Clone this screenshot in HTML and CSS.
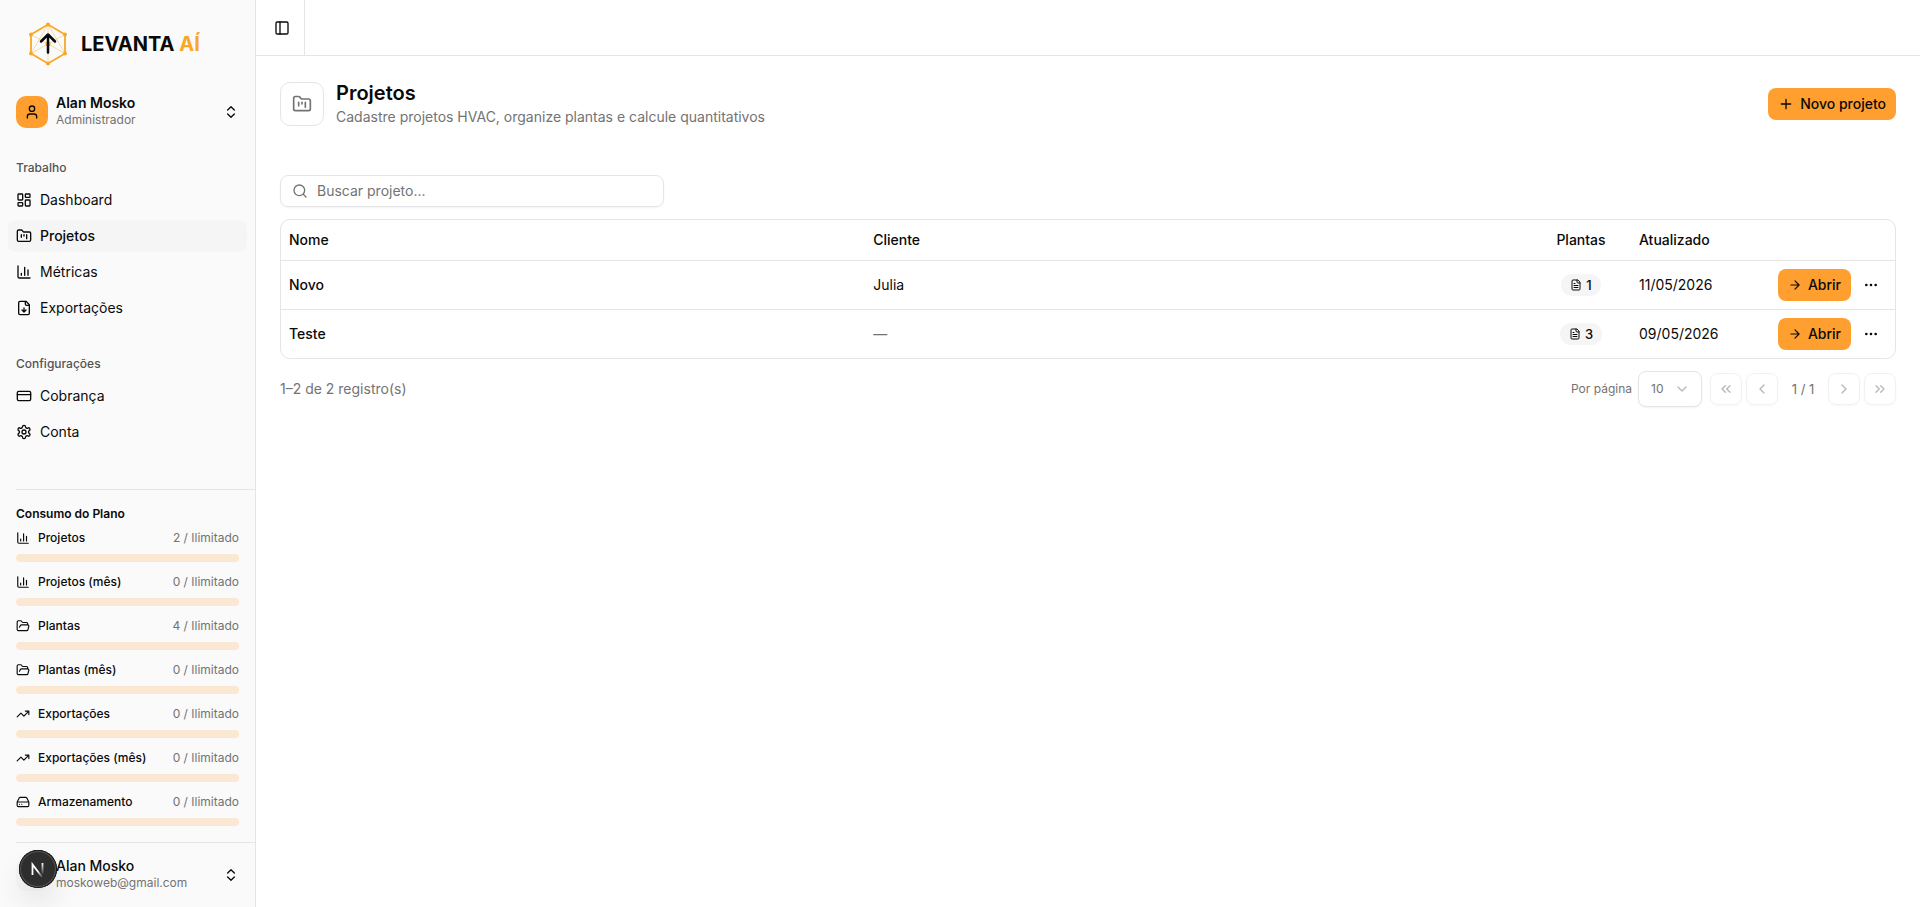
FILE: index.html
```html
<!DOCTYPE html>
<html lang="pt-BR">
<head>
<meta charset="utf-8">
<title>Projetos</title>
<link rel="stylesheet" href="styles.css">
</head>
<body>
<svg class="sprite" aria-hidden="true">
  <symbol id="i-updown" viewBox="0 0 24 24"><path d="m7 15 5 5 5-5M7 9l5-5 5 5"/></symbol>
  <symbol id="i-user" viewBox="0 0 24 24"><circle cx="12" cy="7" r="4"/><path d="M19 21v-2a4 4 0 0 0-4-4H9a4 4 0 0 0-4 4v2"/></symbol>
  <symbol id="i-dash" viewBox="0 0 24 24"><rect x="3" y="3" width="7" height="9" rx="1"/><rect x="14" y="3" width="7" height="5" rx="1"/><rect x="14" y="12" width="7" height="9" rx="1"/><rect x="3" y="16" width="7" height="5" rx="1"/></symbol>
  <symbol id="i-kanban" viewBox="0 0 24 24"><path d="M4 20h16a2 2 0 0 0 2-2V8a2 2 0 0 0-2-2h-7.930a2 2 0 0 1-1.660-.9l-.82-1.200A2 2 0 0 0 7.930 3H4a2 2 0 0 0-2 2v13c0 1.100.9 2 2 2ZM8 10v4M12 10v2M16 10v6"/></symbol>
  <symbol id="i-chart" viewBox="0 0 24 24"><path d="M3 3v16a2 2 0 0 0 2 2h16M18 17V9M13 17V5M8 17v-3"/></symbol>
  <symbol id="i-filedown" viewBox="0 0 24 24"><path d="M15 2H6a2 2 0 0 0-2 2v16a2 2 0 0 0 2 2h12a2 2 0 0 0 2-2V7Z"/><path d="M14 2v4a2 2 0 0 0 2 2h4M12 18v-6M9 15l3 3 3-3"/></symbol>
  <symbol id="i-card" viewBox="0 0 24 24"><rect x="2" y="5" width="20" height="14" rx="2"/><path d="M2 10h20"/></symbol>
  <symbol id="i-gear" viewBox="0 0 24 24"><path d="M12.220 2h-.44a2 2 0 0 0-2 2v.18a2 2 0 0 1-1 1.730l-.43.25a2 2 0 0 1-2 0l-.15-.08a2 2 0 0 0-2.730.73l-.22.38a2 2 0 0 0 .73 2.730l.15.1a2 2 0 0 1 1 1.720v.51a2 2 0 0 1-1 1.740l-.15.09a2 2 0 0 0-.73 2.730l.22.38a2 2 0 0 0 2.730.73l.15-.08a2 2 0 0 1 2 0l.43.25a2 2 0 0 1 1 1.730V20a2 2 0 0 0 2 2h.44a2 2 0 0 0 2-2v-.18a2 2 0 0 1 1-1.730l.43-.25a2 2 0 0 1 2 0l.15.08a2 2 0 0 0 2.730-.73l.22-.39a2 2 0 0 0-.73-2.730l-.15-.08a2 2 0 0 1-1-1.740v-.5a2 2 0 0 1 1-1.740l.15-.09a2 2 0 0 0 .73-2.730l-.22-.38a2 2 0 0 0-2.730-.73l-.15.08a2 2 0 0 1-2 0l-.43-.25a2 2 0 0 1-1-1.730V4a2 2 0 0 0-2-2z"/><circle cx="12" cy="12" r="3"/></symbol>
  <symbol id="i-folder" viewBox="0 0 24 24"><path d="m6 14 1.500-2.900A2 2 0 0 1 9.240 10H20a2 2 0 0 1 1.940 2.500l-1.540 6a2 2 0 0 1-1.950 1.500H4a2 2 0 0 1-2-2V5a2 2 0 0 1 2-2h3.900a2 2 0 0 1 1.690.9l.81 1.200a2 2 0 0 0 1.670.9H18a2 2 0 0 1 2 2v2"/></symbol>
  <symbol id="i-trend" viewBox="0 0 24 24"><path d="M22 7l-8.500 8.500-5-5L2 17M16 7h6v6"/></symbol>
  <symbol id="i-drive" viewBox="0 0 24 24"><path d="M22 12H2M5.450 5.110 2 12v6a2 2 0 0 0 2 2h16a2 2 0 0 0 2-2v-6l-3.450-6.890A2 2 0 0 0 16.760 4H7.240a2 2 0 0 0-1.790 1.110zM6 16h.01M10 16h.01"/></symbol>
  <symbol id="i-panel" viewBox="0 0 24 24"><rect x="3" y="3" width="18" height="18" rx="2"/><path d="M9 3v18"/></symbol>
  <symbol id="i-search" viewBox="0 0 24 24"><circle cx="11" cy="11" r="8"/><path d="m21 21-4.300-4.300"/></symbol>
  <symbol id="i-plus" viewBox="0 0 24 24"><path d="M5 12h14M12 5v14"/></symbol>
  <symbol id="i-filetext" viewBox="0 0 24 24"><path d="M15 2H6a2 2 0 0 0-2 2v16a2 2 0 0 0 2 2h12a2 2 0 0 0 2-2V7Z"/><path d="M14 2v4a2 2 0 0 0 2 2h4M10 9H8M16 13H8M16 17H8"/></symbol>
  <symbol id="i-arrow" viewBox="0 0 24 24"><path d="M5 12h14M12 5l7 7-7 7"/></symbol>
  <symbol id="i-dots" viewBox="0 0 24 24"><circle cx="12" cy="12" r="1"/><circle cx="19" cy="12" r="1"/><circle cx="5" cy="12" r="1"/></symbol>
  <symbol id="i-down" viewBox="0 0 24 24"><path d="m6 9 6 6 6-6"/></symbol>
  <symbol id="i-first" viewBox="0 0 24 24"><path d="m11 17-5-5 5-5M18 17l-5-5 5-5"/></symbol>
  <symbol id="i-prev" viewBox="0 0 24 24"><path d="m15 18-6-6 6-6"/></symbol>
  <symbol id="i-next" viewBox="0 0 24 24"><path d="m9 18 6-6-6-6"/></symbol>
  <symbol id="i-last" viewBox="0 0 24 24"><path d="m6 17 5-5-5-5M13 17l5-5-5-5"/></symbol>
</svg>

<div class="app">
  <aside class="sidebar">
    <div class="brand">
      <svg class="brand-mark" viewBox="0 0 40 44" aria-hidden="true">
        <g class="mesh"><path d="M20 2.500 3 31.500M20 2.500 37 31.500M3 12.500 37 31.500M37 12.500 3 31.500M20 2.500V41.500"/></g>
        <path class="hex" d="M20 2.500 37 12.500V31.500L20 41.500 3 31.500V12.500Z"/>
        <g class="nodes"><circle cx="20" cy="2.500" r="2"/><circle cx="37" cy="12.500" r="2"/><circle cx="37" cy="31.500" r="2"/><circle cx="20" cy="41.500" r="2"/><circle cx="3" cy="31.500" r="2"/><circle cx="3" cy="12.500" r="2"/><circle cx="20" cy="22" r="2.500"/></g>
        <path class="up" d="M20 30.500V13M13 19.500l7-7 7 7"/>
      </svg>
      <span class="brand-name">LEVANTA <span class="brand-accent">AÍ</span></span>
    </div>

    <button class="account" type="button">
      <span class="avatar"><svg class="icon"><use href="#i-user"/></svg></span>
      <span class="who"><span class="who-name strong">Alan Mosko</span><span class="who-sub">Administrador</span></span>
      <svg class="icon"><use href="#i-updown"/></svg>
    </button>

    <nav class="groups">
      <section class="group">
        <h2 class="group-label">Trabalho</h2>
        <a class="item" href="#"><svg class="icon"><use href="#i-dash"/></svg>Dashboard</a>
        <a class="item active" href="#"><svg class="icon"><use href="#i-kanban"/></svg>Projetos</a>
        <a class="item" href="#"><svg class="icon"><use href="#i-chart"/></svg>Métricas</a>
        <a class="item" href="#"><svg class="icon"><use href="#i-filedown"/></svg>Exportações</a>
      </section>
      <section class="group">
        <h2 class="group-label">Configurações</h2>
        <a class="item" href="#"><svg class="icon"><use href="#i-card"/></svg>Cobrança</a>
        <a class="item" href="#"><svg class="icon"><use href="#i-gear"/></svg>Conta</a>
      </section>
    </nav>

    <section class="usage">
      <h2 class="usage-title">Consumo do Plano</h2>
      <div class="meter"><svg class="icon"><use href="#i-chart"/></svg><span class="meter-name">Projetos</span><span class="meter-value">2 / Ilimitado</span><div class="bar"></div></div>
      <div class="meter"><svg class="icon"><use href="#i-chart"/></svg><span class="meter-name">Projetos (mês)</span><span class="meter-value">0 / Ilimitado</span><div class="bar"></div></div>
      <div class="meter"><svg class="icon"><use href="#i-folder"/></svg><span class="meter-name">Plantas</span><span class="meter-value">4 / Ilimitado</span><div class="bar"></div></div>
      <div class="meter"><svg class="icon"><use href="#i-folder"/></svg><span class="meter-name">Plantas (mês)</span><span class="meter-value">0 / Ilimitado</span><div class="bar"></div></div>
      <div class="meter"><svg class="icon"><use href="#i-trend"/></svg><span class="meter-name">Exportações</span><span class="meter-value">0 / Ilimitado</span><div class="bar"></div></div>
      <div class="meter"><svg class="icon"><use href="#i-trend"/></svg><span class="meter-name">Exportações (mês)</span><span class="meter-value">0 / Ilimitado</span><div class="bar"></div></div>
      <div class="meter"><svg class="icon"><use href="#i-drive"/></svg><span class="meter-name">Armazenamento</span><span class="meter-value">0 / Ilimitado</span><div class="bar"></div></div>
    </section>

    <footer class="side-foot">
      <button class="account" type="button">
        <span class="avatar muted"></span>
        <span class="who"><span class="who-name">Alan Mosko</span><span class="who-sub">moskoweb@gmail.com</span></span>
        <svg class="icon"><use href="#i-updown"/></svg>
      </button>
    </footer>
  </aside>

  <div class="content">
    <header class="topbar">
      <button class="toggle" type="button" aria-label="Alternar menu"><svg class="icon"><use href="#i-panel"/></svg></button>
    </header>
    <main class="page">
      <div class="page-head">
        <span class="page-icon"><svg class="icon"><use href="#i-kanban"/></svg></span>
        <div class="page-titles">
          <h1>Projetos</h1>
          <p>Cadastre projetos HVAC, organize plantas e calcule quantitativos</p>
        </div>
        <button class="btn" type="button"><svg class="icon"><use href="#i-plus"/></svg>Novo projeto</button>
      </div>

      <label class="search">
        <svg class="icon"><use href="#i-search"/></svg>
        <input type="search" placeholder="Buscar projeto..." aria-label="Buscar projeto">
      </label>

      <div class="table-box">
        <table>
          <colgroup><col class="c-name"><col><col class="c-plants"><col class="c-date"><col class="c-actions"></colgroup>
          <thead><tr><th>Nome</th><th>Cliente</th><th class="center">Plantas</th><th>Atualizado</th><th></th></tr></thead>
          <tbody>
            <tr><td class="strong-cell">Novo</td><td>Julia</td><td class="center"><span class="badge"><svg class="icon"><use href="#i-filetext"/></svg>1</span></td><td>11/05/2026</td>
              <td><div class="actions"><button class="btn" type="button"><svg class="icon"><use href="#i-arrow"/></svg>Abrir</button><button class="more" type="button" aria-label="Mais opções"><svg class="icon"><use href="#i-dots"/></svg></button></div></td></tr>
            <tr><td class="strong-cell">Teste</td><td class="none">—</td><td class="center"><span class="badge"><svg class="icon"><use href="#i-filetext"/></svg>3</span></td><td>09/05/2026</td>
              <td><div class="actions"><button class="btn" type="button"><svg class="icon"><use href="#i-arrow"/></svg>Abrir</button><button class="more" type="button" aria-label="Mais opções"><svg class="icon"><use href="#i-dots"/></svg></button></div></td></tr>
          </tbody>
        </table>
      </div>

      <div class="pager">
        <span class="count">1–2 de 2 registro(s)</span>
        <label class="per-label" for="per">Por página</label>
        <span class="select"><select id="per"><option>10</option></select><svg class="icon"><use href="#i-down"/></svg></span>
        <div class="steps">
          <button class="step" type="button" disabled aria-label="Primeira"><svg class="icon"><use href="#i-first"/></svg></button>
          <button class="step" type="button" disabled aria-label="Anterior"><svg class="icon"><use href="#i-prev"/></svg></button>
          <span class="where">1 / 1</span>
          <button class="step" type="button" disabled aria-label="Próxima"><svg class="icon"><use href="#i-next"/></svg></button>
          <button class="step" type="button" disabled aria-label="Última"><svg class="icon"><use href="#i-last"/></svg></button>
        </div>
      </div>
    </main>
  </div>
</div>

<button class="dev" type="button" aria-label="Ferramentas">
  <svg viewBox="0 0 38 38" aria-hidden="true">
    <defs>
      <linearGradient id="n1" gradientUnits="userSpaceOnUse" x1="20" y1="20" x2="25" y2="27"><stop stop-color="#fff"/><stop offset="1" stop-color="#fff" stop-opacity="0"/></linearGradient>
      <linearGradient id="n2" gradientUnits="userSpaceOnUse" x1="24" y1="13" x2="24" y2="25"><stop stop-color="#fff"/><stop offset="1" stop-color="#fff" stop-opacity="0"/></linearGradient>
    </defs>
    <path d="M13.500 25V14.500L23 27" fill="none" stroke="url(#n1)" stroke-width="1.800"/>
    <path d="M23.500 13v11" fill="none" stroke="url(#n2)" stroke-width="1.800"/>
  </svg>
</button>
</body>
</html>
```

FILE: styles.css
```css
* { box-sizing: border-box; }

body {
  margin: 0;
  background: #fff;
  color: #0a0a0a;
  font: 14px/20px Inter, "Noto Sans", sans-serif;
}

h1, h2, p { margin: 0; }
button, input, select { font: inherit; color: inherit; }
button { padding: 0; border: 0; background: none; }

.sprite { position: absolute; width: 0; height: 0; }

.icon {
  display: block;
  flex: none;
  width: 16px;
  height: 16px;
  fill: none;
  stroke: currentColor;
  stroke-width: 2;
  stroke-linecap: round;
  stroke-linejoin: round;
}

.app { display: flex; min-height: 100vh; }

/* Sidebar */
.sidebar {
  display: flex;
  flex-direction: column;
  flex: none;
  width: 256px;
  border-right: 1px solid #e5e5e5;
  background: #fafafa;
}

.brand {
  display: flex;
  align-items: center;
  gap: 13px;
  padding: 22px 28px 25px;
}
.brand-mark { width: 40px; height: 44px; fill: none; }
.brand-mark .mesh { stroke: #f9a826; stroke-opacity: 0.4; }
.brand-mark .hex { stroke: #f9a826; stroke-width: 1.800; }
.brand-mark .nodes { fill: #f9a826; }
.brand-mark .up { stroke: #0a0a0a; stroke-width: 2.500; stroke-linecap: round; stroke-linejoin: round; }
.brand-name { font-size: 20px; line-height: 24px; font-weight: 700; }
.brand-accent { color: #f9a826; }

.account {
  display: flex;
  align-items: center;
  gap: 8px;
  width: 100%;
  padding: 3px 16px;
  text-align: left;
}
.avatar {
  display: grid;
  place-items: center;
  width: 32px;
  height: 32px;
  border-radius: 10px;
  background: #ff9f30;
}
.avatar.muted { background: #f5f5f5; }
.who { display: grid; flex: 1; padding-bottom: 2px; }
.who-name { line-height: 18px; font-weight: 500; }
.who-name.strong { font-weight: 600; }
.who-sub { font-size: 12px; line-height: 16px; color: #737373; }

.groups { display: grid; gap: 8px; padding-top: 11px; }
.group { display: grid; gap: 4px; padding: 8px; }
.group-label {
  margin-bottom: -4px;
  padding: 0 8px;
  font-size: 12px;
  line-height: 32px;
  font-weight: 500;
  color: #535353;
}
.item {
  display: flex;
  align-items: center;
  gap: 8px;
  height: 32px;
  padding: 0 8px;
  border-radius: 8px;
  color: inherit;
  text-decoration: none;
}
.item.active { background: #f5f5f5; font-weight: 500; }

.usage {
  display: grid;
  gap: 8px;
  margin: auto 0 0 16px;
  padding: 16px 16px 16px 0;
  border-top: 1px solid #e5e5e5;
  font-size: 12px;
  line-height: 16px;
}
.usage-title { font-size: 12px; line-height: 16px; font-weight: 600; }
.meter {
  display: grid;
  grid-template-columns: 14px 1fr auto;
  align-items: center;
  gap: 8px;
  padding-bottom: 4px;
}
.meter .icon { width: 14px; height: 14px; }
.meter:last-child { padding-bottom: 0; }
.meter-name { font-weight: 500; }
.meter-value { color: #737373; }
.bar { grid-column: 1 / -1; height: 8px; border-radius: 4px; background: #fbe8d2; }

.side-foot { margin-left: 16px; padding: 11px 0; border-top: 1px solid #e5e5e5; }
.side-foot .account { padding-left: 0; }

/* Main column */
.content { flex: 1; min-width: 0; }
.topbar { display: flex; height: 56px; border-bottom: 1px solid #e5e5e5; }
.toggle {
  display: grid;
  place-items: center;
  width: 49px;
  padding-left: 4px;
  border-right: 1px solid #e5e5e5;
}

.page { padding: 25px 24px 24px; }
.page-head { display: flex; align-items: center; gap: 12px; margin-bottom: 48px; }
.page-icon {
  display: grid;
  place-items: center;
  width: 44px;
  height: 44px;
  border: 1px solid #e5e5e5;
  border-radius: 10px;
  color: #737373;
}
.page-icon .icon { width: 20px; height: 20px; }
.page-titles { flex: 1; }
.page-titles h1 { font-size: 20px; line-height: 24px; font-weight: 600; }
.page-titles p { margin-top: 2px; color: #737373; }

.btn {
  display: inline-flex;
  align-items: center;
  gap: 6px;
  height: 32px;
  padding: 0 10px;
  border-radius: 8px;
  background: #ff9f30;
  font-weight: 500;
}

.search {
  display: flex;
  align-items: center;
  gap: 9px;
  width: 384px;
  height: 32px;
  margin-bottom: 12px;
  padding: 0 11px;
  border: 1px solid #e5e5e5;
  border-radius: 8px;
  box-shadow: 0 1px 2px #0000000d;
  color: #737373;
}
.search input { flex: 1; min-width: 0; padding: 0; border: 0; outline: 0; background: none; color: #0a0a0a; }
.search input::placeholder { color: #737373; opacity: 1; }

.table-box { overflow: hidden; border: 1px solid #e5e5e5; border-radius: 10px; }
table { width: 100%; border-collapse: collapse; table-layout: fixed; }
th { height: 40px; padding: 0 8px; text-align: left; font-weight: 500; }
td { height: 48px; padding: 8px; }
tbody tr { border-top: 1px solid #e5e5e5; }
.c-name { width: 36.2%; }
.c-plants { width: 100px; }
.c-date { width: 138px; }
.c-actions { width: 126px; }
.center { text-align: center; }
.strong-cell { font-weight: 500; }
.none { color: #737373; }
.badge {
  display: inline-flex;
  align-items: center;
  gap: 4px;
  height: 22px;
  padding: 0 9px;
  border-radius: 11px;
  background: #f5f5f5;
  font-size: 13px;
  font-weight: 500;
  vertical-align: middle;
}
.badge .icon { width: 12px; height: 12px; }
.actions { display: flex; justify-content: flex-end; gap: 4px; }
.actions .btn .icon { width: 14px; height: 14px; }
.more { display: grid; place-items: center; width: 32px; height: 32px; }

.pager {
  display: flex;
  align-items: center;
  gap: 6px;
  margin-top: 12px;
  font-size: 12px;
  color: #737373;
}
.count { flex: 1; font-size: 14px; }
.select { display: grid; align-items: center; width: 64px; }
.select select {
  grid-area: 1 / 1;
  height: 36px;
  padding: 0 12px;
  border: 1px solid #e5e5e5;
  border-radius: 8px;
  background: #fff;
  box-shadow: 0 1px 2px #0000000d;
  appearance: none;
}
.select .icon { grid-area: 1 / 1; justify-self: end; margin-right: 12px; opacity: 0.5; pointer-events: none; }
.steps { display: flex; align-items: center; gap: 4px; margin-left: 2px; }
.step {
  display: grid;
  place-items: center;
  width: 32px;
  height: 32px;
  border: 1px solid #e5e5e5;
  border-radius: 8px;
  box-shadow: 0 1px 2px #0000000d;
  color: #737373;
  opacity: 0.5;
}
.where { min-width: 42px; font-size: 13px; text-align: center; }

/* Floating developer button */
.dev {
  position: fixed;
  left: 19px;
  bottom: 19px;
  width: 38px;
  height: 38px;
  border-radius: 50%;
  background: #2e2e2e;
  box-shadow: inset 0 0 0 1px #171717, inset 0 0 0 2px #565656, 0 16px 32px -8px #0000003d;
}
.dev svg { display: block; }
```
